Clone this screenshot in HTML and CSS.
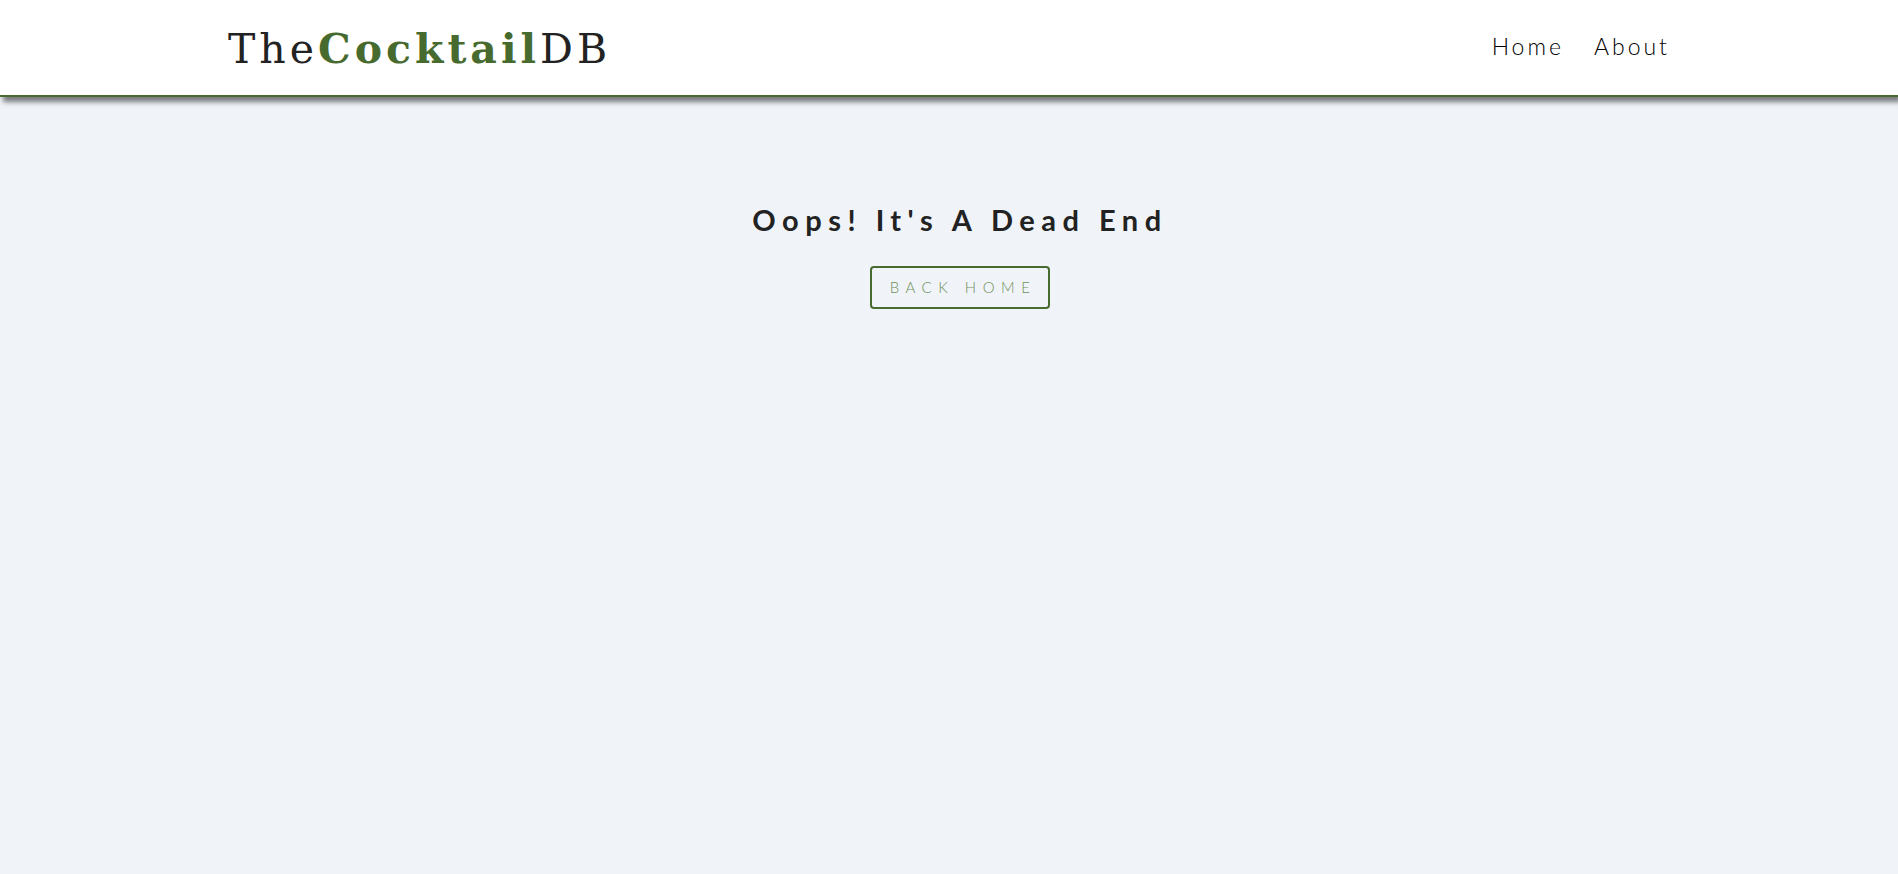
FILE: index.html
```html
<!DOCTYPE html>
<html lang="en">
<head>
<meta charset="utf-8">
<title>TheCocktailDB</title>
<link rel="stylesheet" href="styles.css">
</head>
<body>
<header class="navbar">
  <div class="nav-center">
    <a class="logo" href="#"><span class="logo-light">The</span><span class="logo-bold">Cocktail</span><span class="logo-light">DB</span></a>
    <ul class="nav-links">
      <li><a href="#">Home</a></li>
      <li><a href="#">About</a></li>
    </ul>
  </div>
</header>
<main class="error-page">
  <div class="error-container">
    <h1 class="error-title">Oops! It's A Dead End</h1>
    <a class="btn-primary" href="#">Back Home</a>
  </div>
</main>
</body>
</html>
```
FILE: styles.css
```css
* { box-sizing: border-box; margin: 0; padding: 0; }
html, body { height: 100%; }
body {
  background: #f0f4f8;
  font-family: Lato, "Open Sans", sans-serif;
  color: #222;
}
a { text-decoration: none; color: inherit; }
ul { list-style: none; }

.navbar {
  height: 97px;
  background: #fff;
  border-bottom: 2px solid #476a2e;
  box-shadow: 3px 5px 5px rgba(0, 0, 0, 0.5);
  display: flex;
  align-items: center;
}
.nav-center {
  width: 1442px;
  margin: 0 auto;
  display: flex;
  align-items: center;
  justify-content: space-between;
}
.logo {
  font-family: "DejaVu Serif", serif;
  font-size: 41px;
  letter-spacing: 4px;
  color: #222;
  padding-top: 2px;
}
.logo-light { font-weight: 300; }
.logo-bold { font-weight: 700; color: #476a2e; }

.nav-links { display: flex; gap: 30px; padding-bottom: 4px; }
.nav-links a {
  font-size: 23px;
  font-weight: 300;
  letter-spacing: 3px;
  color: #000;
}

.error-page { padding-top: 105px; }
.error-container {
  display: flex;
  flex-direction: column;
  align-items: center;
  padding-left: 22px;
}
.error-title {
  font-size: 29px;
  font-weight: 700;
  letter-spacing: 6.5px;
  color: #222;
  margin-bottom: 29px;
}
.btn-primary {
  display: inline-block;
  width: 180px;
  height: 43px;
  border: 2px solid #476a2e;
  border-radius: 4px;
  text-transform: uppercase;
  font-size: 15px;
  font-weight: 300;
  letter-spacing: 6.5px;
  color: #6f8f5c;
  line-height: 39px;
  text-align: center;
  padding-left: 6px;
}
```
